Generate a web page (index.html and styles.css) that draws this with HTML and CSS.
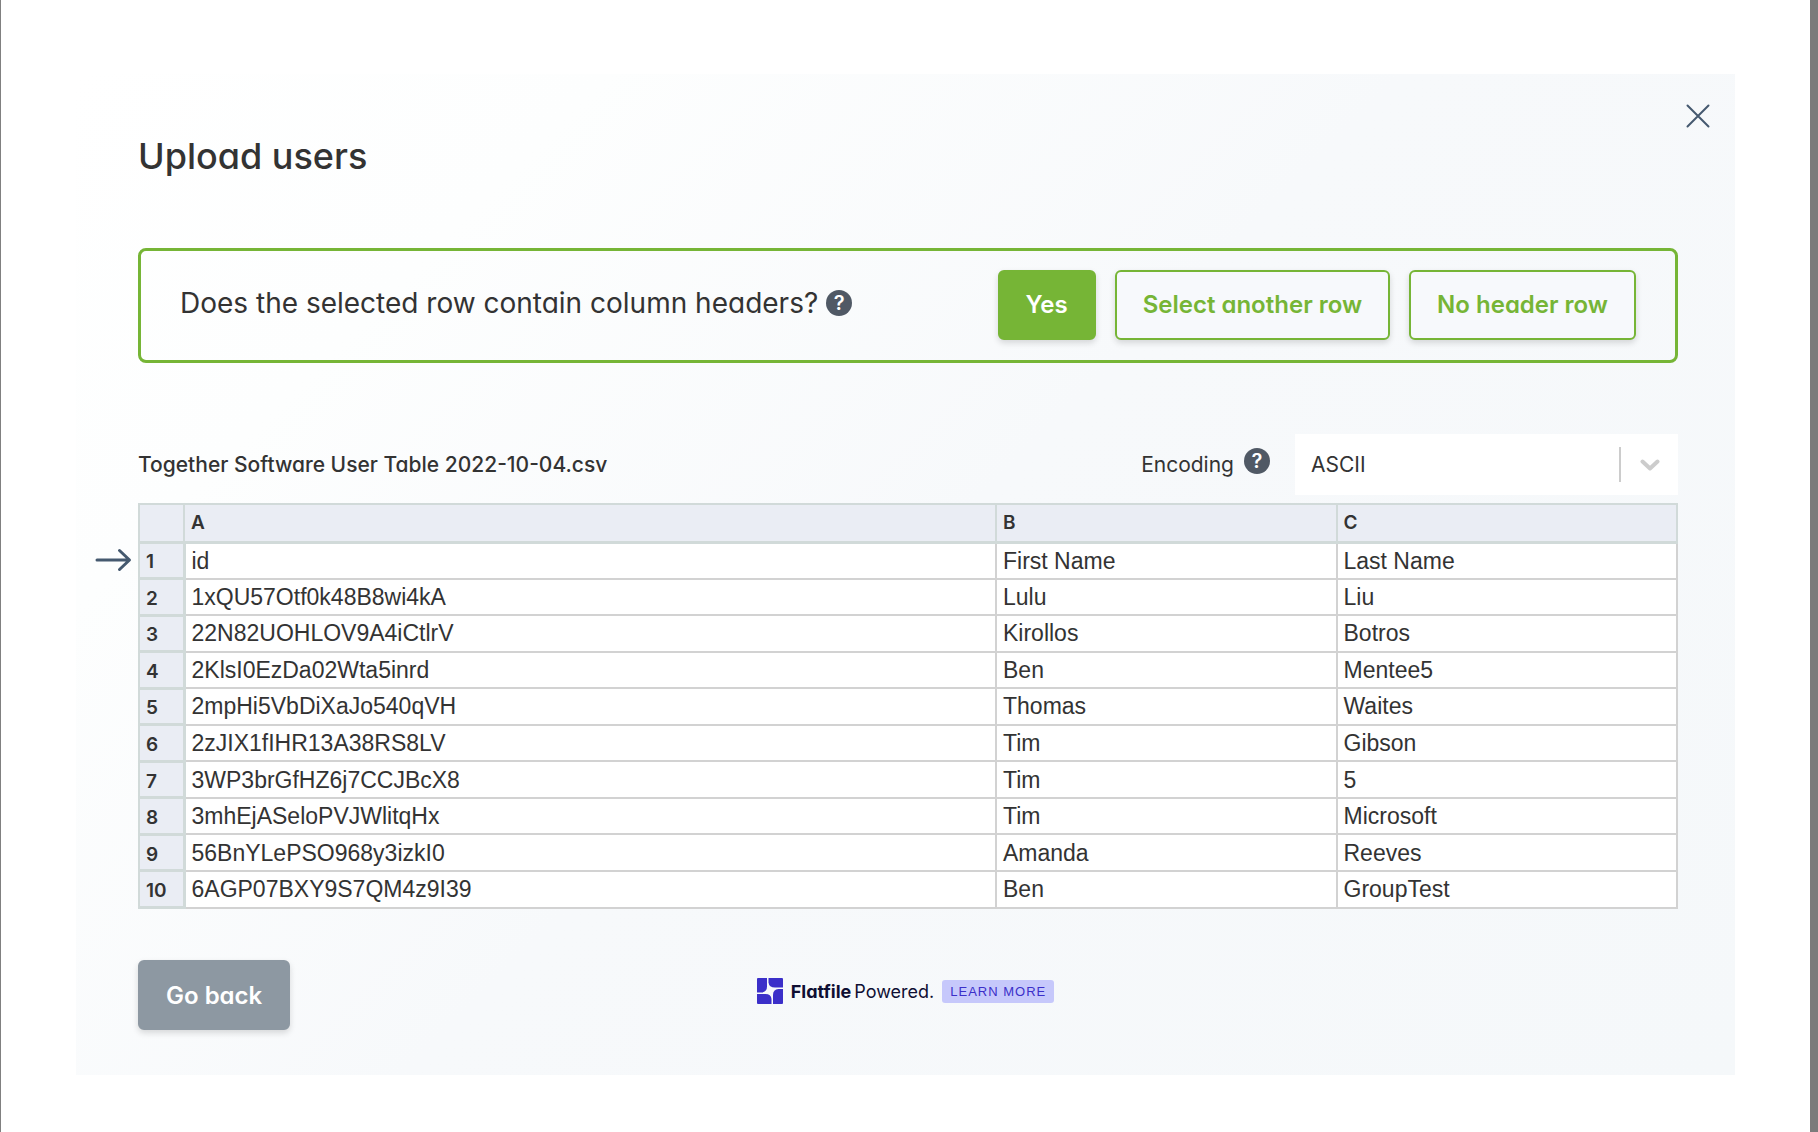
FILE: index.html
```
<!DOCTYPE html>
<html lang="en">
<head>
<meta charset="UTF-8">
<meta name="viewport" content="width=device-width, initial-scale=1.0">
<title>Upload users</title>
<link rel="stylesheet" href="styles.css">
</head>
<body>

<main class="modal">
  <button class="close" type="button" aria-label="Close">
    <svg width="24" height="24" viewBox="0 0 24 24" fill="none" stroke="#45596f" stroke-width="2" stroke-linecap="round">
      <path d="M1.500 1.500 L22.500 22.500 M22.500 1.500 L1.500 22.500"/>
    </svg>
  </button>

  <h1>Upload users</h1>

  <section class="prompt">
    <p class="question">
      Does the selected row contain column headers?
      <span class="help">?</span>
    </p>
    <div class="actions">
      <button class="btn btn-primary" type="button">Yes</button>
      <button class="btn btn-outline" type="button">Select another row</button>
      <button class="btn btn-outline" type="button">No header row</button>
    </div>
  </section>

  <div class="file-bar">
    <div class="file-name">Together Software User Table 2022-10-04.csv</div>
    <div class="encoding">
      <label for="encoding">Encoding</label>
      <span class="help">?</span>
      <div class="select">
        <select id="encoding">
          <option>ASCII</option>
          <option>UTF-8</option>
        </select>
        <!-- Divider and chevron -->
        <span class="indicator">
          <svg width="20" height="12" viewBox="0 0 20 12" fill="none" stroke="#cccccc" stroke-width="4" stroke-linecap="round" stroke-linejoin="round">
            <path d="M2.500 2.500 L10 9.500 L17.500 2.500"/>
          </svg>
        </span>
      </div>
    </div>
  </div>

  <table class="sheet">
    <colgroup>
      <col class="col-num">
      <col class="col-a">
      <col>
      <col>
    </colgroup>
    <thead>
      <tr><th></th><th>A</th><th>B</th><th>C</th></tr>
    </thead>
    <tbody>
      <tr>
        <th>
          <svg class="arrow" width="37" height="24" viewBox="0 0 37 24" fill="none" stroke="#45596f" stroke-width="3" stroke-linecap="round" stroke-linejoin="round">
            <path d="M2 12 H34 M24.500 2.500 L34.500 12 L24.500 21.500"/>
          </svg>
          1
        </th>
        <td>id</td><td>First Name</td><td>Last Name</td>
      </tr>
      <tr><th>2</th><td>1xQU57Otf0k48B8wi4kA</td><td>Lulu</td><td>Liu</td></tr>
      <tr><th>3</th><td>22N82UOHLOV9A4iCtlrV</td><td>Kirollos</td><td>Botros</td></tr>
      <tr><th>4</th><td>2KlsI0EzDa02Wta5inrd</td><td>Ben</td><td>Mentee5</td></tr>
      <tr><th>5</th><td>2mpHi5VbDiXaJo540qVH</td><td>Thomas</td><td>Waites</td></tr>
      <tr><th>6</th><td>2zJIX1fIHR13A38RS8LV</td><td>Tim</td><td>Gibson</td></tr>
      <tr><th>7</th><td>3WP3brGfHZ6j7CCJBcX8</td><td>Tim</td><td>5</td></tr>
      <tr><th>8</th><td>3mhEjASeloPVJWlitqHx</td><td>Tim</td><td>Microsoft</td></tr>
      <tr><th>9</th><td>56BnYLePSO968y3izkI0</td><td>Amanda</td><td>Reeves</td></tr>
      <tr><th>10</th><td>6AGP07BXY9S7QM4z9I39</td><td>Ben</td><td>GroupTest</td></tr>
    </tbody>
  </table>

  <footer class="footer">
    <button class="btn btn-back" type="button">Go back</button>
    <div class="powered">
      <svg width="26" height="26" viewBox="0 0 26 26" fill="#3b2fc9">
        <path d="M1 0 H10 V8.500 Q10 14 4.500 14.500 H0 V1 Q0 0 1 0 Z"/>
        <path d="M11.500 0 H25 Q26 0 26 1 V9.500 H18 Q12 9.500 11.500 4.500 Z"/>
        <path d="M0 16 H8.500 Q14 16 14.500 21 V26 H1 Q0 26 0 25 Z"/>
        <path d="M21.500 11 H26 V25 Q26 26 25 26 H16 V17 Q16 11.500 21.500 11 Z"/>
      </svg>
      <span class="brand"><b>Flatfile</b> <span>Powered.</span></span>
      <a class="learn" href="#">LEARN MORE</a>
    </div>
  </footer>
</main>

</body>
</html>
```
FILE: styles.css
```
* {
  box-sizing: border-box;
}

body {
  margin: 0;
  min-height: 100vh;
  padding: 74px 75px 57px;
  border-left: 1px solid #808080;
  border-right: 8px solid #7b7b7b;
  background: #fff;
  color: #333;
  font-family: Inter, "Liberation Sans", sans-serif;
  font-feature-settings: "cv11";
}

.modal {
  position: relative;
  padding: 54px 57px 45px 62px;
  background: linear-gradient(135deg, #fff 0%, #fdfefe 20%, #f7f9fb 50%, #f5f8fa 100%);
}

button {
  font: inherit;
  font-feature-settings: inherit;
  cursor: pointer;
}

.close {
  position: absolute;
  top: 30px;
  right: 25px;
  padding: 0;
  border: none;
  background: none;
  line-height: 0;
}

h1 {
  margin: 0 0 64px;
  font-size: 36px;
  font-weight: 500;
  line-height: 56px;
}

/* Header question */
.prompt {
  display: flex;
  align-items: center;
  justify-content: space-between;
  height: 115px;
  padding: 0 39px 2px;
  border: 3px solid #76b536;
  border-radius: 8px;
}

.question {
  display: flex;
  align-items: center;
  gap: 8px;
  margin: 0;
  padding-bottom: 4px;
  font-size: 28px;
}

.help {
  flex: none;
  width: 26px;
  height: 26px;
  border-radius: 50%;
  background: #505965;
  color: #fff;
  font-size: 20px;
  font-weight: 600;
  line-height: 26px;
  text-align: center;
}

.actions {
  display: flex;
  gap: 19px;
}

.btn {
  height: 70px;
  padding: 0 26px;
  border: 2px solid #76b536;
  border-radius: 6px;
  font-size: 24px;
  font-weight: 600;
  box-shadow: 0 3px 6px rgba(0, 0, 0, 0.14);
}

.btn-primary {
  background: #76b536;
  color: #fff;
}

.btn-outline {
  background: #f7f9fc;
  color: #76b536;
}

/* File name and encoding */
.file-bar {
  display: flex;
  align-items: center;
  justify-content: space-between;
  margin: 71px 0 8px;
}

.file-name {
  font-size: 21px;
  font-weight: 500;
}

.encoding {
  display: flex;
  align-items: center;
  font-size: 21px;
}

.encoding .help {
  margin: 0 25px 8px 10px;
}

.select {
  position: relative;
  width: 383px;
}

.select select {
  width: 100%;
  height: 61px;
  padding: 0 16px;
  border: none;
  border-radius: 0;
  background: #fff;
  color: #333;
  font: inherit;
  appearance: none;
}

.indicator {
  position: absolute;
  top: 13px;
  right: 0;
  display: flex;
  align-items: center;
  justify-content: center;
  width: 59px;
  height: 35px;
  border-left: 2px solid #ccc;
  pointer-events: none;
}

/* Preview of the uploaded rows */
.sheet {
  width: 100%;
  height: 406px;
  table-layout: fixed;
  border-collapse: collapse;
  font-size: 23px;
  line-height: 26px;
}

.sheet .col-num {
  width: 45px;
}

.sheet .col-a {
  width: 812px;
}

.sheet th,
.sheet td {
  padding: 0 6px;
  text-align: left;
}

.sheet td {
  border: 2px solid #d2d2d2;
  background: #fff;
  font-family: "Liberation Sans", Arial, sans-serif;
}

.sheet th {
  position: relative;
  border: 2px solid #d1dad9;
  background: #eaedf4;
  font-size: 19px;
  font-weight: 600;
}

.sheet tbody th {
  padding-top: 4px;
  border-width: 3px 3px 3px 2px;
}

.sheet thead th {
  height: 38px;
  border-bottom-width: 3px;
}

.arrow {
  position: absolute;
  top: 4px;
  right: 51px;
}

/* Footer */
.footer {
  display: grid;
  grid-template-columns: 1fr auto 1fr;
  align-items: center;
  margin-top: 51px;
}

.btn-back {
  justify-self: start;
  border-color: #8d98a2;
  background: #8d98a2;
  color: #fff;
}

.powered {
  display: flex;
  align-items: center;
  gap: 8px;
  padding: 0 5px 8px 0;
  color: #0f0f33;
}

.brand {
  display: flex;
  gap: 3px;
  font-size: 18px;
}

.learn {
  padding: 0 8px;
  border-radius: 3px;
  background: #c6c8fb;
  color: #3b2fc9;
  font-family: "Liberation Sans", sans-serif;
  font-size: 13px;
  letter-spacing: 1px;
  line-height: 23px;
  text-decoration: none;
}
```
